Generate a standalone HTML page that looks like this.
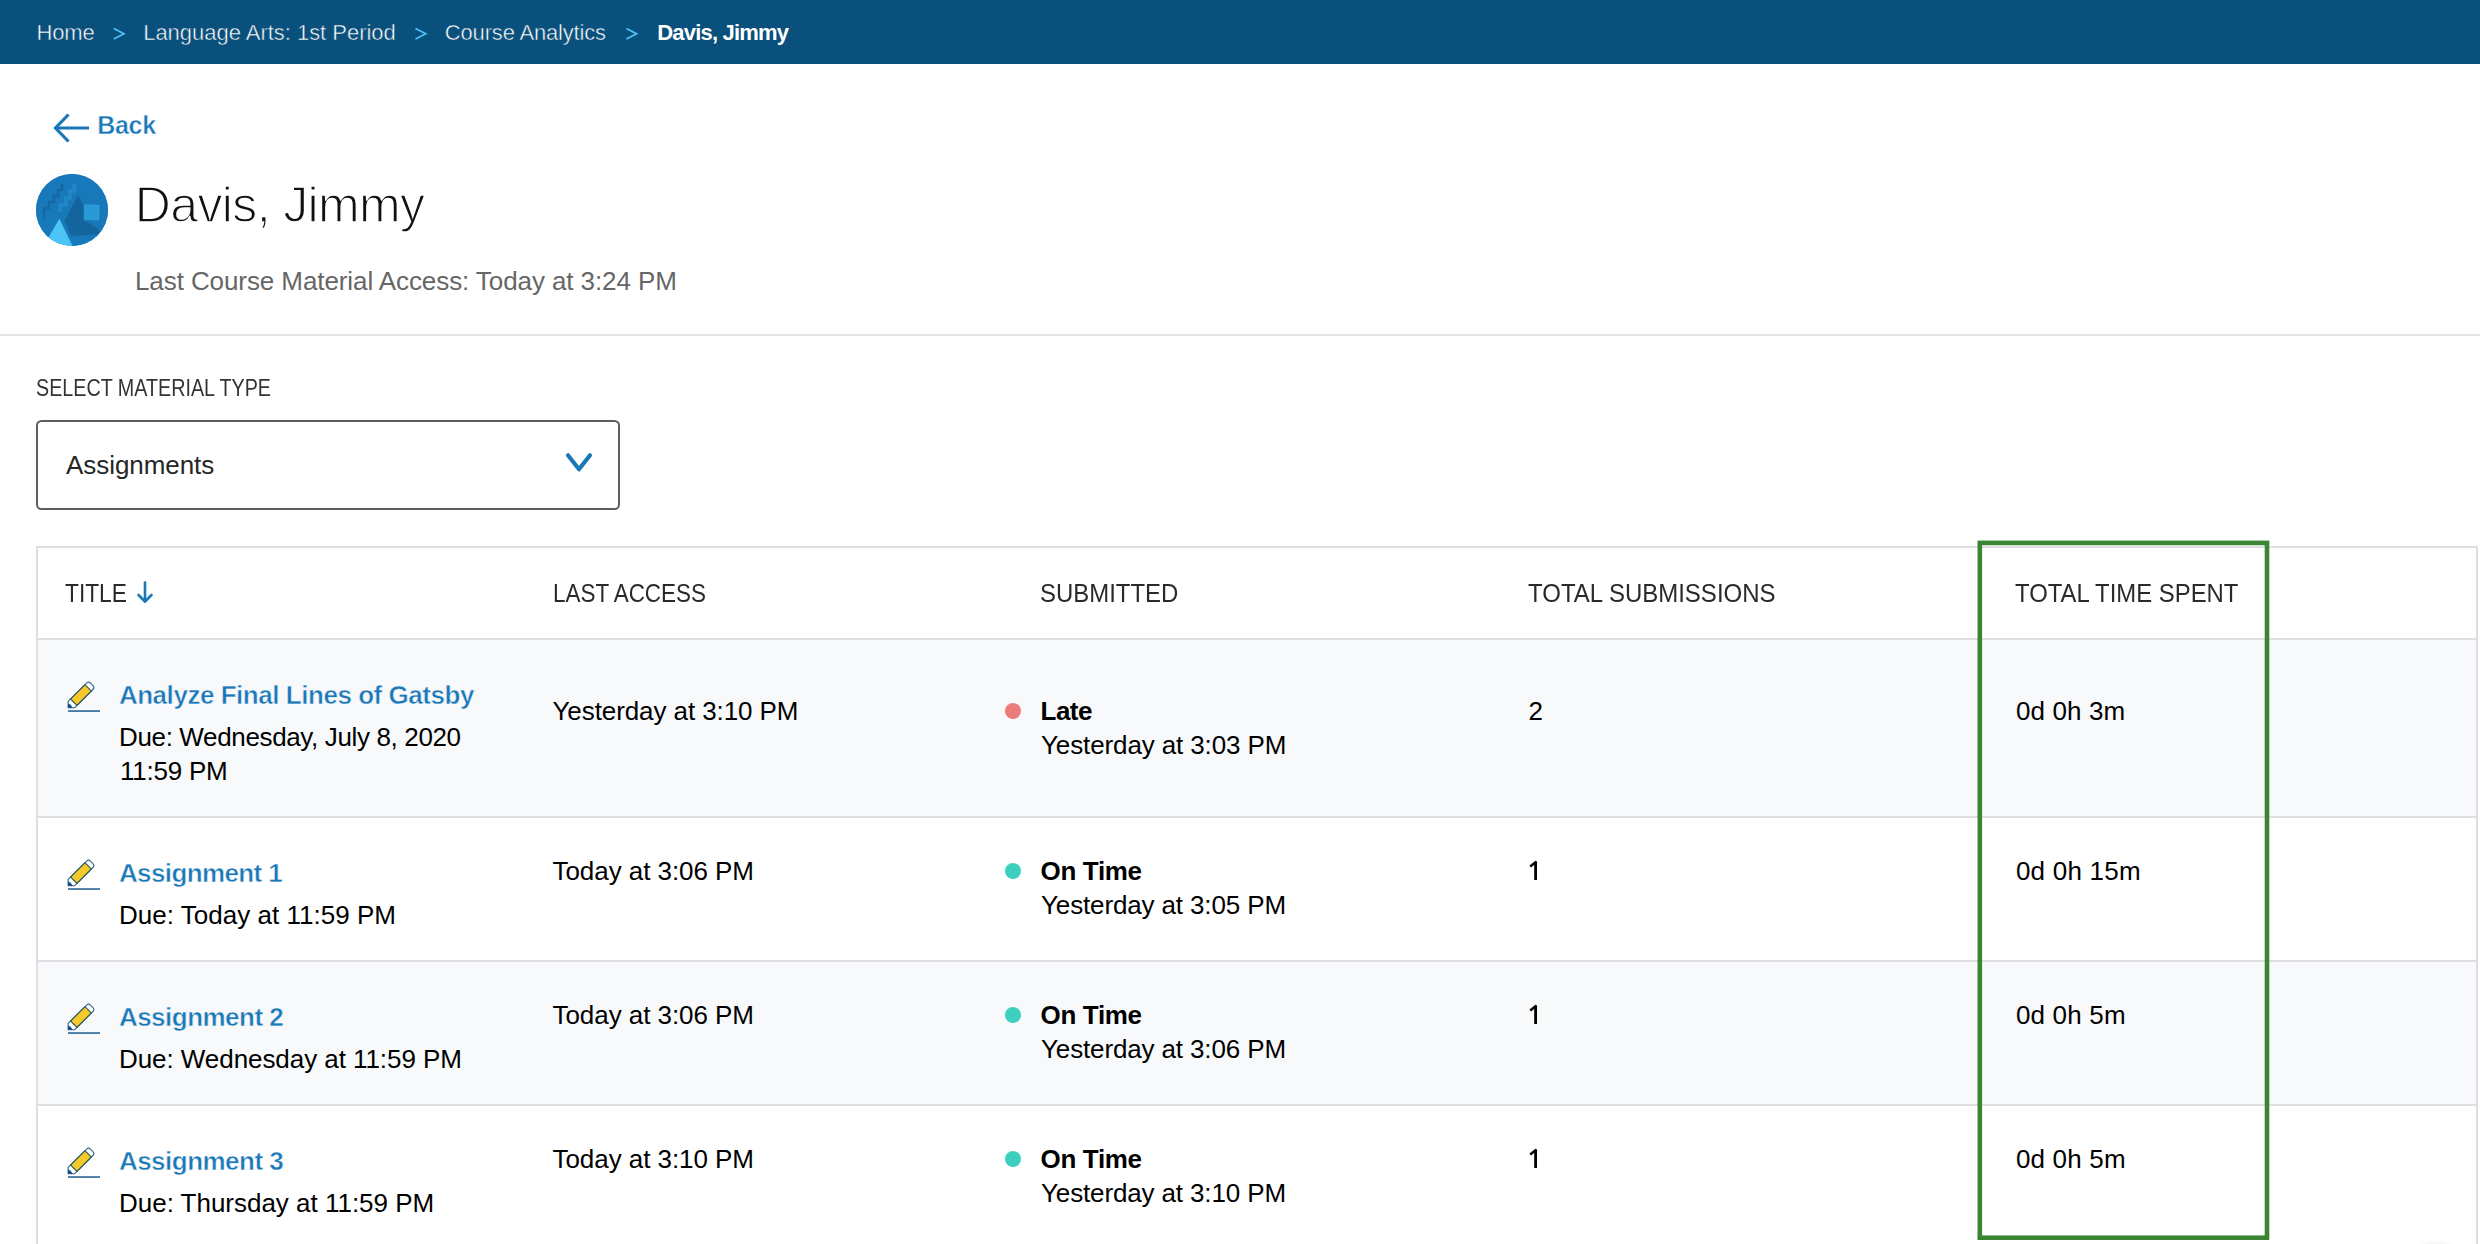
<!DOCTYPE html>
<html><head><meta charset="utf-8"><style>
*{margin:0;padding:0;box-sizing:border-box}
html,body{width:2480px;height:1244px;overflow:hidden;background:#fff;font-family:"Liberation Sans",sans-serif}
.t{position:absolute;white-space:nowrap}
.abs{position:absolute}
</style></head><body>
<div class="abs" style="left:0;top:0;width:2480px;height:64px;background:#0a507c"></div>
<div class="t" style="left:36.50px;top:22.38px;font-size:22px;line-height:22px;color:#ffffff;letter-spacing:-0.167px;-webkit-text-stroke:0.5px #0a507c;">Home</div>
<div class="t" style="left:143.20px;top:22.38px;font-size:22px;line-height:22px;color:#ffffff;letter-spacing:-0.026px;-webkit-text-stroke:0.5px #0a507c;">Language Arts: 1st Period</div>
<div class="t" style="left:444.80px;top:22.38px;font-size:22px;line-height:22px;color:#ffffff;letter-spacing:-0.170px;-webkit-text-stroke:0.5px #0a507c;">Course Analytics</div>
<div class="t" style="left:657.20px;top:22.38px;font-size:22px;line-height:22px;color:#ffffff;font-weight:700;letter-spacing:-0.799px;">Davis, Jimmy</div>
<svg class="abs" style="left:0;top:0" width="800" height="64"><polyline points="113.8,28.5 124.0,33.8 113.8,39.1" fill="none" stroke="#4fc3f7" stroke-width="1.7"/><polyline points="415.5,28.5 425.7,33.8 415.5,39.1" fill="none" stroke="#4fc3f7" stroke-width="1.7"/><polyline points="626.4,28.5 636.6,33.8 626.4,39.1" fill="none" stroke="#4fc3f7" stroke-width="1.7"/></svg>
<svg class="abs" style="left:0;top:90px" width="100" height="70"><g fill="none" stroke="#1a78b8" stroke-width="3.2"><polyline points="68.5,24.5 55.5,38 68.5,51.5"/><line x1="55.5" y1="38" x2="89" y2="38"/></g></svg>
<div class="t" style="left:97.30px;top:112.84px;font-size:25px;line-height:25px;color:#1a78b8;font-weight:700;letter-spacing:-0.332px;-webkit-text-stroke:0.4px #fff;">Back</div>
<div class="abs" style="left:36px;top:174px;width:72px;height:72px;border-radius:50%;overflow:hidden;background:#1879ba">
<svg style="display:block;filter:blur(0.55px)" width="72" height="72" viewBox="0 0 72 72">
<rect x="-4" y="-4" width="80" height="80" fill="#1879ba"/>
<path d="M26 10 L26 16 L22 16 L22 22 L18 22 L18 28 L13 28 L13 34 L8 34 L8 45" fill="none" stroke="#1568a3" stroke-width="2.6"/>
<path d="M38.5 10 L38.5 17 L34 17 L34 24 L30 24 L30 31 L24 31 L24 38" fill="none" stroke="#2088c8" stroke-width="3.5"/>
<polygon points="42,21 47.5,31 47.5,46 60,53 66,60 35,62 28.5,47" fill="#14659e"/>
<polygon points="48,30 63.6,31 63.2,46.5 48,46" fill="#2a9ad6"/>
<polygon points="23.4,44.7 5,76 38.5,76" fill="#4cc4f6"/>
</svg></div>
<div class="t" style="left:134.80px;top:179.68px;font-size:50px;line-height:50px;color:#111;letter-spacing:-0.635px;-webkit-text-stroke:1.4px #fff;">Davis, Jimmy</div>
<div class="t" style="left:135.00px;top:267.59px;font-size:26px;line-height:26px;color:#666;letter-spacing:-0.089px;">Last Course Material Access: Today at 3:24 PM</div>
<div class="abs" style="left:0;top:334px;width:2480px;height:2px;background:#e4e4e7"></div>
<div class="t" style="left:36.10px;top:376.73px;font-size:23px;line-height:23px;color:#333;letter-spacing:0.000px;transform:scaleX(0.8576);transform-origin:0 0;">SELECT MATERIAL TYPE</div>
<div class="abs" style="left:36px;top:420px;width:584px;height:90px;border:2px solid #5d5d5d;border-radius:5.5px;background:#fff"></div>
<div class="t" style="left:66.10px;top:451.69px;font-size:26px;line-height:26px;color:#262626;letter-spacing:-0.070px;">Assignments</div>
<svg class="abs" style="left:540px;top:430px" width="80" height="60"><polyline points="28,25.3 39,39.3 50,25.3" fill="none" stroke="#1a78b8" stroke-width="4.2" stroke-linecap="round" stroke-linejoin="round"/></svg>
<div class="abs" style="left:36px;top:546px;width:2442px;height:800px;border:2px solid #dedee3;background:#fff"></div>
<div class="abs" style="left:38px;top:638px;width:2438px;height:2px;background:#dedee3"></div>
<div class="abs" style="left:38px;top:640px;width:2438px;height:176px;background:#f8f9fb"></div>
<div class="abs" style="left:38px;top:816px;width:2438px;height:2px;background:#dedee3"></div>
<div class="abs" style="left:38px;top:818px;width:2438px;height:142px;background:#ffffff"></div>
<div class="abs" style="left:38px;top:960px;width:2438px;height:2px;background:#dedee3"></div>
<div class="abs" style="left:38px;top:962px;width:2438px;height:142px;background:#f8f9fb"></div>
<div class="abs" style="left:38px;top:1104px;width:2438px;height:2px;background:#dedee3"></div>
<div class="abs" style="left:38px;top:1106px;width:2438px;height:194px;background:#ffffff"></div>
<div class="t" style="left:65.00px;top:579.57px;font-size:26.5px;line-height:26.5px;color:#2a2a2a;letter-spacing:0.000px;transform:scaleX(0.8587);transform-origin:0 0;">TITLE</div>
<svg class="abs" style="left:130px;top:575px" width="30" height="32"><g fill="none" stroke="#1a78b8" stroke-width="2.6" stroke-linecap="round" stroke-linejoin="round"><line x1="15" y1="7.5" x2="15" y2="26.5"/><polyline points="8.5,20 15,26.5 21.5,20"/></g></svg>
<div class="t" style="left:553.20px;top:579.57px;font-size:26.5px;line-height:26.5px;color:#2a2a2a;letter-spacing:0.000px;transform:scaleX(0.8464);transform-origin:0 0;">LAST ACCESS</div>
<div class="t" style="left:1040.10px;top:579.57px;font-size:26.5px;line-height:26.5px;color:#2a2a2a;letter-spacing:0.000px;transform:scaleX(0.9036);transform-origin:0 0;">SUBMITTED</div>
<div class="t" style="left:1527.90px;top:579.57px;font-size:26.5px;line-height:26.5px;color:#2a2a2a;letter-spacing:0.000px;transform:scaleX(0.9054);transform-origin:0 0;">TOTAL SUBMISSIONS</div>
<div class="t" style="left:2015.30px;top:579.57px;font-size:26.5px;line-height:26.5px;color:#2a2a2a;letter-spacing:0.000px;transform:scaleX(0.9013);transform-origin:0 0;">TOTAL TIME SPENT</div>
<svg class="abs" style="left:66px;top:680px" width="36" height="36" viewBox="0 0 36 36">
<g transform="translate(2.1,27.8) rotate(-44.8)">
<path d="M0 0 L4.5 -4.5 L30.5 -4.5 Q33.3 -4.5 33.3 -1.7 L33.3 1.7 Q33.3 4.5 30.5 4.5 L4.5 4.5 Z" fill="#ffffff" stroke="#2f6a8f" stroke-width="1.1" stroke-linejoin="round"/>
<rect x="8" y="-4.5" width="20.3" height="9" fill="#f7c82b" stroke="#2b5a5a" stroke-width="1.1"/>
<path d="M0 0 L3.2 -3.2 Q4.4 0 3.2 3.2 Z" fill="#0f4a7a"/>
</g>
<rect x="2" y="30.1" width="32" height="1.9" fill="#4b7ba2"/>
</svg>
<div class="t" style="left:118.90px;top:681.99px;font-size:26px;line-height:26px;color:#1a78b8;font-weight:700;letter-spacing:-0.463px;-webkit-text-stroke:0.5px #f8f9fb;">Analyze Final Lines of Gatsby</div>
<div class="t" style="left:119.00px;top:723.69px;font-size:26px;line-height:26px;color:#000;letter-spacing:-0.357px;">Due: Wednesday, July 8, 2020</div>
<div class="t" style="left:120.00px;top:757.69px;font-size:26px;line-height:26px;color:#000;letter-spacing:-0.242px;">11:59 PM</div>
<div class="t" style="left:552.50px;top:697.99px;font-size:26px;line-height:26px;color:#000;letter-spacing:-0.087px;">Yesterday at 3:10 PM</div>
<div class="abs" style="left:1005px;top:703px;width:16px;height:16px;border-radius:50%;background:#ec7b7b"></div>
<div class="t" style="left:1040.60px;top:697.99px;font-size:26px;line-height:26px;color:#000;font-weight:700;letter-spacing:-0.570px;">Late</div>
<div class="t" style="left:1041.00px;top:731.99px;font-size:26px;line-height:26px;color:#000;letter-spacing:-0.120px;">Yesterday at 3:03 PM</div>
<div class="t" style="left:1528.40px;top:697.99px;font-size:26px;line-height:26px;color:#000;letter-spacing:0.000px;">2</div>
<div class="t" style="left:2015.90px;top:697.99px;font-size:26px;line-height:26px;color:#000;letter-spacing:0.136px;">0d 0h 3m</div>
<svg class="abs" style="left:66px;top:858px" width="36" height="36" viewBox="0 0 36 36">
<g transform="translate(2.1,27.8) rotate(-44.8)">
<path d="M0 0 L4.5 -4.5 L30.5 -4.5 Q33.3 -4.5 33.3 -1.7 L33.3 1.7 Q33.3 4.5 30.5 4.5 L4.5 4.5 Z" fill="#ffffff" stroke="#2f6a8f" stroke-width="1.1" stroke-linejoin="round"/>
<rect x="8" y="-4.5" width="20.3" height="9" fill="#f7c82b" stroke="#2b5a5a" stroke-width="1.1"/>
<path d="M0 0 L3.2 -3.2 Q4.4 0 3.2 3.2 Z" fill="#0f4a7a"/>
</g>
<rect x="2" y="30.1" width="32" height="1.9" fill="#4b7ba2"/>
</svg>
<div class="t" style="left:118.90px;top:859.99px;font-size:26px;line-height:26px;color:#1a78b8;font-weight:700;letter-spacing:-0.602px;-webkit-text-stroke:0.5px #ffffff;">Assignment 1</div>
<div class="t" style="left:119.00px;top:901.69px;font-size:26px;line-height:26px;color:#000;letter-spacing:0.023px;">Due: Today at 11:59 PM</div>
<div class="t" style="left:552.50px;top:857.99px;font-size:26px;line-height:26px;color:#000;letter-spacing:-0.056px;">Today at 3:06 PM</div>
<div class="abs" style="left:1005px;top:863px;width:16px;height:16px;border-radius:50%;background:#3dcfbf"></div>
<div class="t" style="left:1040.60px;top:857.99px;font-size:26px;line-height:26px;color:#000;font-weight:700;letter-spacing:-0.365px;">On Time</div>
<div class="t" style="left:1041.00px;top:891.99px;font-size:26px;line-height:26px;color:#000;letter-spacing:-0.136px;">Yesterday at 3:05 PM</div>
<div class="t" style="left:1531.10px;top:857.99px;font-size:26px;line-height:26px;color:#000;letter-spacing:0.000px;visibility:hidden;">1</div>
<svg class="abs" style="left:1520px;top:855px" width="30" height="30"><g fill="none" stroke="#000" stroke-linecap="butt"><line x1="15.6" y1="6.9" x2="15.6" y2="25" stroke-width="2.8"/><line x1="16.6" y1="6.6" x2="10.2" y2="11.4" stroke-width="2.5"/></g></svg>
<div class="t" style="left:2015.90px;top:857.99px;font-size:26px;line-height:26px;color:#000;letter-spacing:0.225px;">0d 0h 15m</div>
<svg class="abs" style="left:66px;top:1002px" width="36" height="36" viewBox="0 0 36 36">
<g transform="translate(2.1,27.8) rotate(-44.8)">
<path d="M0 0 L4.5 -4.5 L30.5 -4.5 Q33.3 -4.5 33.3 -1.7 L33.3 1.7 Q33.3 4.5 30.5 4.5 L4.5 4.5 Z" fill="#ffffff" stroke="#2f6a8f" stroke-width="1.1" stroke-linejoin="round"/>
<rect x="8" y="-4.5" width="20.3" height="9" fill="#f7c82b" stroke="#2b5a5a" stroke-width="1.1"/>
<path d="M0 0 L3.2 -3.2 Q4.4 0 3.2 3.2 Z" fill="#0f4a7a"/>
</g>
<rect x="2" y="30.1" width="32" height="1.9" fill="#4b7ba2"/>
</svg>
<div class="t" style="left:118.90px;top:1003.99px;font-size:26px;line-height:26px;color:#1a78b8;font-weight:700;letter-spacing:-0.513px;-webkit-text-stroke:0.5px #f8f9fb;">Assignment 2</div>
<div class="t" style="left:119.00px;top:1045.69px;font-size:26px;line-height:26px;color:#000;letter-spacing:-0.062px;">Due: Wednesday at 11:59 PM</div>
<div class="t" style="left:552.50px;top:1001.99px;font-size:26px;line-height:26px;color:#000;letter-spacing:-0.056px;">Today at 3:06 PM</div>
<div class="abs" style="left:1005px;top:1007px;width:16px;height:16px;border-radius:50%;background:#3dcfbf"></div>
<div class="t" style="left:1040.60px;top:1001.99px;font-size:26px;line-height:26px;color:#000;font-weight:700;letter-spacing:-0.365px;">On Time</div>
<div class="t" style="left:1041.00px;top:1035.99px;font-size:26px;line-height:26px;color:#000;letter-spacing:-0.136px;">Yesterday at 3:06 PM</div>
<div class="t" style="left:1531.10px;top:1001.99px;font-size:26px;line-height:26px;color:#000;letter-spacing:0.000px;visibility:hidden;">1</div>
<svg class="abs" style="left:1520px;top:999px" width="30" height="30"><g fill="none" stroke="#000" stroke-linecap="butt"><line x1="15.6" y1="6.9" x2="15.6" y2="25" stroke-width="2.8"/><line x1="16.6" y1="6.6" x2="10.2" y2="11.4" stroke-width="2.5"/></g></svg>
<div class="t" style="left:2015.90px;top:1001.99px;font-size:26px;line-height:26px;color:#000;letter-spacing:0.195px;">0d 0h 5m</div>
<svg class="abs" style="left:66px;top:1146px" width="36" height="36" viewBox="0 0 36 36">
<g transform="translate(2.1,27.8) rotate(-44.8)">
<path d="M0 0 L4.5 -4.5 L30.5 -4.5 Q33.3 -4.5 33.3 -1.7 L33.3 1.7 Q33.3 4.5 30.5 4.5 L4.5 4.5 Z" fill="#ffffff" stroke="#2f6a8f" stroke-width="1.1" stroke-linejoin="round"/>
<rect x="8" y="-4.5" width="20.3" height="9" fill="#f7c82b" stroke="#2b5a5a" stroke-width="1.1"/>
<path d="M0 0 L3.2 -3.2 Q4.4 0 3.2 3.2 Z" fill="#0f4a7a"/>
</g>
<rect x="2" y="30.1" width="32" height="1.9" fill="#4b7ba2"/>
</svg>
<div class="t" style="left:118.90px;top:1147.99px;font-size:26px;line-height:26px;color:#1a78b8;font-weight:700;letter-spacing:-0.513px;-webkit-text-stroke:0.5px #ffffff;">Assignment 3</div>
<div class="t" style="left:119.00px;top:1189.69px;font-size:26px;line-height:26px;color:#000;letter-spacing:-0.015px;">Due: Thursday at 11:59 PM</div>
<div class="t" style="left:552.50px;top:1145.99px;font-size:26px;line-height:26px;color:#000;letter-spacing:-0.056px;">Today at 3:10 PM</div>
<div class="abs" style="left:1005px;top:1151px;width:16px;height:16px;border-radius:50%;background:#3dcfbf"></div>
<div class="t" style="left:1040.60px;top:1145.99px;font-size:26px;line-height:26px;color:#000;font-weight:700;letter-spacing:-0.365px;">On Time</div>
<div class="t" style="left:1041.00px;top:1179.99px;font-size:26px;line-height:26px;color:#000;letter-spacing:-0.136px;">Yesterday at 3:10 PM</div>
<div class="t" style="left:1531.10px;top:1145.99px;font-size:26px;line-height:26px;color:#000;letter-spacing:0.000px;visibility:hidden;">1</div>
<svg class="abs" style="left:1520px;top:1143px" width="30" height="30"><g fill="none" stroke="#000" stroke-linecap="butt"><line x1="15.6" y1="6.9" x2="15.6" y2="25" stroke-width="2.8"/><line x1="16.6" y1="6.6" x2="10.2" y2="11.4" stroke-width="2.5"/></g></svg>
<div class="t" style="left:2015.90px;top:1145.99px;font-size:26px;line-height:26px;color:#000;letter-spacing:0.195px;">0d 0h 5m</div>
<svg class="abs" style="left:0;top:0" width="2480" height="1244"><rect x="1979.8" y="542.9" width="287.2" height="694.8" fill="none" stroke="#3a8532" stroke-width="4.6"/></svg>
<div class="abs" style="left:2412px;top:1247px;width:50px;height:40px;border-radius:50%;box-shadow:0 -1px 7px 1px rgba(0,0,0,0.13)"></div>
</body></html>
